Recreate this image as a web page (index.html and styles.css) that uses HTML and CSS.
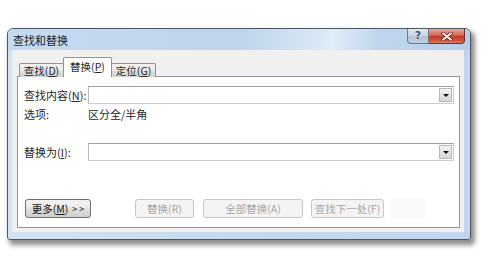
FILE: index.html
```html
<!DOCTYPE html>
<html lang="zh-CN">
<head>
<meta charset="utf-8">
<title>查找和替换</title>
<link rel="stylesheet" href="styles.css">
</head>
<body>
<div class="window">
  <div class="titlebar">
    <span class="title">查找和替换</span>
    <div class="caption-btns">
      <div class="cbtn help"><span>?</span></div>
      <div class="cbtn close">
        <svg width="12" height="9" viewBox="0 0 12 9">
          <path d="M2 1.2 L10 7.8 M10 1.2 L2 7.8" stroke="#6e1f15" stroke-width="3.4" stroke-linecap="round"/>
          <path d="M2 1.2 L10 7.8 M10 1.2 L2 7.8" stroke="#ffffff" stroke-width="1.8" stroke-linecap="round"/>
        </svg>
      </div>
    </div>
  </div>
  <div class="client">
    <div class="tabs">
      <div class="tab">查找(<u>D</u>)</div>
      <div class="tab active">替换(<u>P</u>)</div>
      <div class="tab">定位(<u>G</u>)</div>
    </div>
    <div class="panel">
      <div class="row r1">
        <span class="label">查找内容(<u>N</u>):</span>
        <div class="combo"><span class="drop"></span></div>
      </div>
      <div class="row r2">
        <span class="label">选项:</span>
        <span class="value">区分全/半角</span>
      </div>
      <div class="row r3">
        <span class="label">替换为(<u>I</u>):</span>
        <div class="combo"><span class="drop"></span></div>
      </div>
      <div class="buttons">
        <div class="btn more">更多(<u>M</u>) <span class="arrows">&gt; &gt;</span></div>
        <div class="btn disabled b-replace">替换(R)</div>
        <div class="btn disabled b-all">全部替换(A)</div>
        <div class="btn disabled b-next">查找下一处(F)</div>
        <div class="ghost"></div>
      </div>
    </div>
  </div>
</div>
</body>
</html>
```
FILE: styles.css
```css
html, body {
  margin: 0;
  padding: 0;
  background: #ffffff;
}
body {
  width: 500px;
  height: 265px;
  overflow: hidden;
  font-family: "Noto Sans CJK SC", "Noto Sans", sans-serif;
  font-size: 11px;
  color: #262626;
}
u {
  text-decoration: underline;
  text-underline-offset: 1px;
}
.window {
  box-sizing: border-box;
  width: 464px;
  height: 212px;
  margin: 28px 0 0 7px;
  border: 1px solid #4e5660;
  border-radius: 6px 6px 3px 3px;
  background: linear-gradient(90deg, #d3e3f3 0%, #c6daee 50%, #c1d6ed 100%);
  box-shadow: 3px 4px 5px 1px rgba(0, 0, 0, 0.45);
  display: flex;
  flex-direction: column;
  padding: 0 6px 7px 4px;
}
.titlebar {
  height: 21px;
  display: flex;
  align-items: center;
  justify-content: space-between;
  margin: 0 -6px 0 -4px;
  padding: 0 6px 0 5px;
  border-radius: 5px 5px 0 0;
  background: linear-gradient(100deg, #c6daef 0%, #bfd5ec 50%, #d6e6f5 66%, #e0ecf8 70%, #c0d6ed 80%, #b7cee9 100%);
}
.title {
  color: #222222;
  font-size: 11px;
  line-height: 14px;
  padding-top: 1px;
}
.caption-btns {
  display: flex;
  align-self: flex-start;
  margin-right: -1px;
}
.cbtn {
  height: 15px;
  display: flex;
  align-items: center;
  justify-content: center;
  box-sizing: border-box;
  border: 1px solid #6c7888;
  border-top: none;
}
.help {
  width: 22px;
  border-radius: 0 0 0 4px;
  background: linear-gradient(180deg, #dfe7ef 0%, #cbd6e2 45%, #b3c2d2 55%, #c4d2e0 100%);
}
.help span {
  font-family: "DejaVu Sans", sans-serif;
  font-weight: bold;
  font-size: 11px;
  line-height: 12px;
  color: #3e5068;
  text-shadow: 0 0 2px #ffffff;
}
.close {
  width: 36px;
  border-left: none;
  border-color: #7a2a22;
  border-radius: 0 0 4px 0;
  background: linear-gradient(180deg, #e8a89c 0%, #d7715f 40%, #c43b26 55%, #d2563f 85%, #e0836d 100%);
}
.client {
  flex: 1;
  background: #f0f0f0;
  padding: 8px 4px 0 5px;
  display: flex;
  flex-direction: column;
}
.tabs {
  display: flex;
  align-items: flex-end;
  height: 18px;
  padding-left: 2px;
  position: relative;
  z-index: 1;
}
.tab {
  box-sizing: border-box;
  height: 14px;
  margin-bottom: -1px;
  border: 1px solid #8e929a;
  border-bottom: none;
  border-radius: 2px 2px 0 0;
  background: linear-gradient(180deg, #f3f3f3 0%, #ebebeb 50%, #dedede 52%, #d4d4d4 100%);
  display: flex;
  align-items: center;
  justify-content: center;
  font-size: 10.5px;
  line-height: 12px;
  width: 45px;
}
.tab + .tab {
  margin-left: -1px;
}
.tab.active {
  height: 20px;
  width: 49px;
  background: #ffffff;
  position: relative;
  z-index: 2;
  align-items: flex-start;
  padding-top: 3px;
}
.tab:last-child {
  width: 45px;
}
.panel {
  box-sizing: border-box;
  height: 152px;
  border: 1px solid #8e929a;
  background: #ffffff;
  padding: 9px 5px 0 6px;
  display: flex;
  flex-direction: column;
}
.row {
  display: flex;
  align-items: center;
}
.label {
  width: 64px;
  flex: none;
  white-space: nowrap;
  line-height: 14px;
}
.value {
  line-height: 14px;
}
.r1, .r3 {
  height: 18px;
}
.r2 {
  height: 14px;
  margin-top: 3px;
}
.r3 {
  margin-top: 22px;
}
.combo {
  flex: 1;
  height: 18px;
  box-sizing: border-box;
  border: 1px solid #a9acb2;
  border-color: #9da1a8 #c9ccd2 #c9ccd2 #b5b8be;
  background: #ffffff;
  display: flex;
  justify-content: flex-end;
  align-items: center;
  padding-right: 1px;
}
.drop {
  width: 13px;
  height: 14px;
  box-sizing: border-box;
  border: 1px solid #b8b8b8;
  background: linear-gradient(180deg, #f4f4f4 0%, #e4e4e4 50%, #d6d6d6 100%);
  position: relative;
}
.drop::after {
  content: "";
  position: absolute;
  left: 3px;
  top: 5px;
  border-left: 3px solid transparent;
  border-right: 3px solid transparent;
  border-top: 3px solid #111111;
}
.buttons {
  display: flex;
  margin-top: 38px;
  height: 19px;
  padding-left: 1px;
}
.btn {
  box-sizing: border-box;
  height: 19px;
  border-radius: 3px;
  display: flex;
  align-items: center;
  justify-content: center;
  font-size: 10.5px;
  white-space: nowrap;
}
.more {
  width: 66px;
  border: 1px solid #707070;
  background: linear-gradient(180deg, #f3f3f3 0%, #ebebeb 48%, #dddddd 52%, #cfcfcf 100%);
  color: #111111;
}
.arrows {
  font-size: 9px;
  margin-left: 4px;
  letter-spacing: 0;
}
.disabled {
  border: 1px solid #c3c5c8;
  background: #f4f4f4;
  color: #a6a6a6;
}
.b-replace {
  width: 59px;
  margin-left: 44px;
}
.b-all {
  width: 100px;
  margin-left: 9px;
}
.b-next {
  width: 73px;
  margin-left: 8px;
}
.ghost {
  width: 35px;
  height: 20px;
  margin-left: 6px;
  background: #f9f9f9;
}
```
